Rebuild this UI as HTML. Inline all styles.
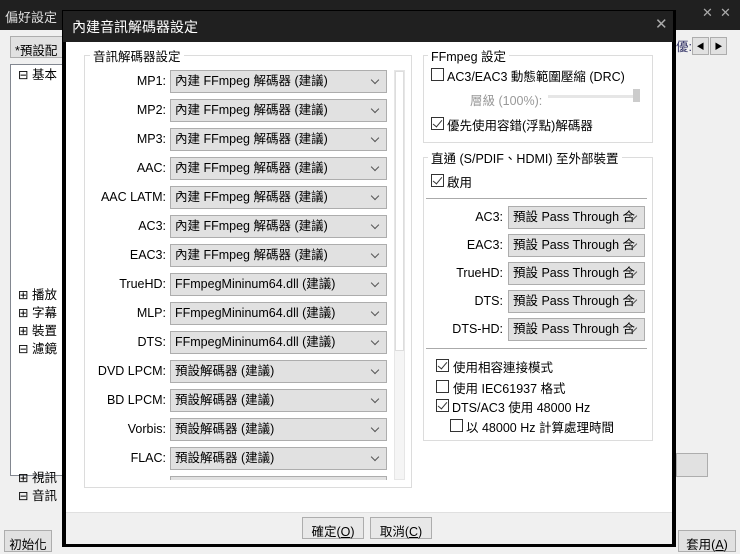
<!DOCTYPE html>
<html><head><meta charset="utf-8"><style>
*{box-sizing:border-box;margin:0;padding:0}
body{width:740px;height:554px;overflow:hidden;background:#f0f0f0;font-family:"Liberation Sans","Noto Sans CJK TC",sans-serif;font-size:12px;color:#000;position:relative}
.a{position:absolute}
.combo{position:absolute;height:23px;background:#e1e1e1;border:1px solid #adadad;padding:3px 0 0 4px;font-size:12.5px;line-height:15px;white-space:nowrap;overflow:hidden}
.combo:after{content:"";position:absolute;right:8px;top:6px;width:5px;height:5px;border-right:1px solid #555;border-bottom:1px solid #555;transform:rotate(45deg)}
.cb{position:absolute;width:13px;height:13px;border:1px solid #333;background:#fff}
.cb.on:after{content:"";position:absolute;left:3px;top:0px;width:4px;height:8px;border-right:1.5px solid #333;border-bottom:1.5px solid #333;transform:rotate(40deg)}
.btn{position:absolute;height:22px;background:#e1e1e1;border:1px solid #adadad;text-align:center;padding-top:3px;font-size:12.5px}
.grp{position:absolute;border:1px solid #dcdcdc}
.gt{position:absolute;background:#fff;padding:0 3px;font-size:12.5px}
</style></head><body>
<div class="a" style="left:0;top:0;width:740px;height:30px;background:#202020;color:#ddd;font-size:13px;padding:7px 0 0 5px">偏好設定</div>
<div class="a" style="left:702px;top:5px;color:#aaa;font-size:13px">✕</div>
<div class="a" style="left:720px;top:5px;color:#aaa;font-size:13px">✕</div>
<div class="a" style="left:10px;top:36px;width:60px;height:22px;background:#e1e1e1;border:1px solid #adadad;padding:3px 4px;font-size:12.5px">*預設配</div>
<div class="a" style="left:10px;top:64px;width:60px;height:412px;background:#fff;border:1px solid #828790"></div>
<div class="a" style="left:18px;top:66px;font-size:12.5px;line-height:18.3px;color:#000">⊟ 基本<br><br><br><br><br><br><br><br><br><br><br><br>⊞ 播放<br>⊞ 字幕<br>⊞ 裝置<br>⊟ 濾鏡<br><br><br><br><br><br><br>⊞ 視訊<br>⊟ 音訊</div>
<div class="a" style="left:676px;top:36px;color:#336;font-size:12.5px">優:</div>
<div class="a" style="left:692px;top:37px;width:17px;height:18px;border:1px solid #adadad;background:#e1e1e1;font-size:8px;text-align:center;padding-top:3px">◀</div>
<div class="a" style="left:710px;top:37px;width:17px;height:18px;border:1px solid #adadad;background:#e1e1e1;font-size:8px;text-align:center;padding-top:3px">▶</div>
<div class="a" style="left:676px;top:453px;width:32px;height:24px;border:1px solid #adadad;background:#e1e1e1"></div>
<div class="btn" style="left:4px;top:530px;width:48px">初始化</div>
<div class="btn" style="left:678px;top:530px;width:58px">套用(<u>A</u>)</div>
<div class="a" style="left:62px;top:10px;width:614px;height:537px;background:#000"></div>
<div class="a" style="left:63px;top:11px;width:610px;height:31px;background:#202020;color:#fff;font-size:14px;padding:6px 0 0 9px">內建音訊解碼器設定</div>
<div class="a" style="left:655px;top:15px;color:#aaa;font-size:15px">✕</div>
<div class="a" style="left:66px;top:42px;width:606px;height:470px;background:#fff"></div>
<div class="a" style="left:66px;top:512px;width:606px;height:32px;background:#f0f0f0;border-top:1px solid #e0e0e0"></div>
<div class="btn" style="left:302px;top:517px;width:62px;background:#e8e8e8">確定(<u>O</u>)</div>
<div class="btn" style="left:370px;top:517px;width:62px;background:#e8e8e8">取消(<u>C</u>)</div>
<div class="grp" style="left:84px;top:55px;width:328px;height:433px"></div>
<div class="gt" style="left:90px;top:46px">音訊解碼器設定</div>
<div class="a" style="left:170px;top:70px;width:217px;height:410px;overflow:hidden">
<div class="combo" style="left:0;top:0;width:217px">內建 FFmpeg 解碼器 (建議)</div>
<div class="combo" style="left:0;top:29px;width:217px">內建 FFmpeg 解碼器 (建議)</div>
<div class="combo" style="left:0;top:58px;width:217px">內建 FFmpeg 解碼器 (建議)</div>
<div class="combo" style="left:0;top:87px;width:217px">內建 FFmpeg 解碼器 (建議)</div>
<div class="combo" style="left:0;top:116px;width:217px">內建 FFmpeg 解碼器 (建議)</div>
<div class="combo" style="left:0;top:145px;width:217px">內建 FFmpeg 解碼器 (建議)</div>
<div class="combo" style="left:0;top:174px;width:217px">內建 FFmpeg 解碼器 (建議)</div>
<div class="combo" style="left:0;top:203px;width:217px">FFmpegMininum64.dll (建議)</div>
<div class="combo" style="left:0;top:232px;width:217px">FFmpegMininum64.dll (建議)</div>
<div class="combo" style="left:0;top:261px;width:217px">FFmpegMininum64.dll (建議)</div>
<div class="combo" style="left:0;top:290px;width:217px">預設解碼器 (建議)</div>
<div class="combo" style="left:0;top:319px;width:217px">預設解碼器 (建議)</div>
<div class="combo" style="left:0;top:348px;width:217px">預設解碼器 (建議)</div>
<div class="combo" style="left:0;top:377px;width:217px">預設解碼器 (建議)</div>
<div class="combo" style="left:0;top:406px;width:217px"></div>
</div>
<div class="a" style="left:60px;top:67px;width:106px;line-height:29px;text-align:right;font-size:12.5px">MP1:<br>MP2:<br>MP3:<br>AAC:<br>AAC LATM:<br>AC3:<br>EAC3:<br>TrueHD:<br>MLP:<br>DTS:<br>DVD LPCM:<br>BD LPCM:<br>Vorbis:<br>FLAC:</div>
<div class="a" style="left:394px;top:70px;width:11px;height:410px;background:#f5f5f5;border:1px solid #e6e6e6"></div>
<div class="a" style="left:395px;top:71px;width:9px;height:280px;background:#fff;border:1px solid #ddd"></div>
<div class="grp" style="left:423px;top:55px;width:230px;height:88px"></div>
<div class="gt" style="left:428px;top:46px">FFmpeg 設定</div>
<div class="cb" style="left:431px;top:68px"></div>
<div class="a" style="left:447px;top:66px;font-size:12.5px">AC3/EAC3 動態範圍壓縮 (DRC)</div>
<div class="a" style="left:470px;top:90px;color:#999;font-size:12.5px">層級 (100%):</div>
<div class="a" style="left:548px;top:95px;width:90px;height:3px;background:#e6e6e6"></div>
<div class="a" style="left:633px;top:89px;width:7px;height:13px;background:#ccc"></div>
<div class="cb on" style="left:431px;top:117px"></div>
<div class="a" style="left:447px;top:115px;font-size:12.5px">優先使用容錯(浮點)解碼器</div>
<div class="grp" style="left:423px;top:157px;width:230px;height:284px"></div>
<div class="gt" style="left:428px;top:148px">直通 (S/PDIF、HDMI) 至外部裝置</div>
<div class="cb on" style="left:431px;top:174px"></div>
<div class="a" style="left:447px;top:172px;font-size:12.5px">啟用</div>
<div class="a" style="left:426px;top:198px;width:221px;height:1px;background:#aaa"></div>
<div class="a" style="left:430px;top:203px;width:73px;line-height:28px;text-align:right;font-size:12.5px">AC3:<br>EAC3:<br>TrueHD:<br>DTS:<br>DTS-HD:</div>
<div class="combo" style="left:508px;top:206px;width:137px">預設 Pass Through 合</div>
<div class="combo" style="left:508px;top:234px;width:137px">預設 Pass Through 合</div>
<div class="combo" style="left:508px;top:262px;width:137px">預設 Pass Through 合</div>
<div class="combo" style="left:508px;top:290px;width:137px">預設 Pass Through 合</div>
<div class="combo" style="left:508px;top:318px;width:137px">預設 Pass Through 合</div>
<div class="a" style="left:426px;top:348px;width:221px;height:1px;background:#aaa"></div>
<div class="cb on" style="left:436px;top:359px"></div>
<div class="a" style="left:453px;top:357px;font-size:12.5px">使用相容連接模式</div>
<div class="cb" style="left:436px;top:380px"></div>
<div class="a" style="left:453px;top:378px;font-size:12.5px">使用 IEC61937 格式</div>
<div class="cb on" style="left:436px;top:399px"></div>
<div class="a" style="left:452px;top:397px;font-size:12.5px">DTS/AC3 使用 48000 Hz</div>
<div class="cb" style="left:450px;top:419px"></div>
<div class="a" style="left:466px;top:417px;font-size:12.5px">以 48000 Hz 計算處理時間</div>
</body></html>
